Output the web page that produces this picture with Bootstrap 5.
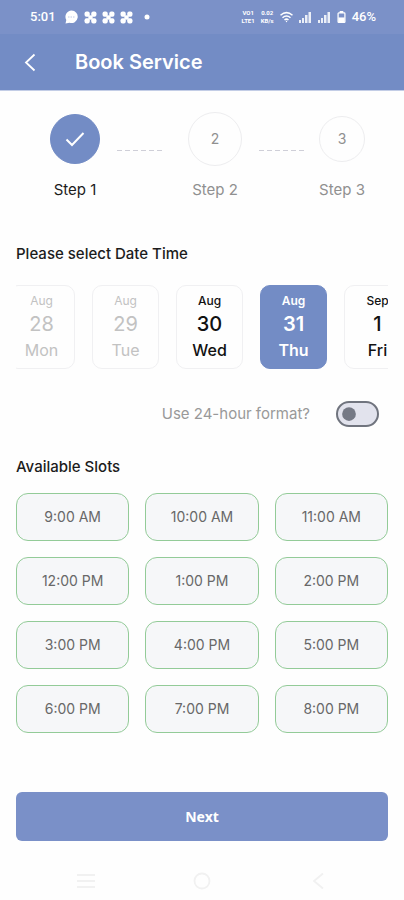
<!DOCTYPE html>
<html lang="en">
<head>
<meta charset="utf-8">
<meta name="viewport" content="width=device-width, initial-scale=1">
<title>Book Service</title>
<link href="https://cdn.jsdelivr.net/npm/bootstrap@5.3.0/dist/css/bootstrap.min.css" rel="stylesheet">
<style>
  :root { --brand: #738cc5; --brand-soft: #7b91c8; --hairline: #f0f0f2; }
  body { font-family: Inter, "Liberation Sans", sans-serif; color: #1c1c1c; background: #fefefe; }
  .status-strip { height: 34px; background: var(--brand-soft); color: #fff; font: 500 13px/16px Roboto, sans-serif; padding: 0 28px 0 30px; }
  .clovers { gap: 5px; margin: 0 11px 0 5px; }
  .status-right { gap: 6px; }
  .tiny-stat { font: 700 6px/8px Roboto, sans-serif; text-align: center; }
  .app-bar { height: 57px; background: var(--brand); border-bottom: 1px solid #c3cde6; padding: 0 16px; }
  .app-bar h1 { font-size: 20px; line-height: 24px; font-weight: 600; color: #fff; margin-left: 32px; }
  .back-btn { width: 27px; height: 32px; }
  .steps { padding: 21px 39px 0 50px; }
  .step { color: #909090; font-size: 15px; line-height: 20px; }
  .step.done { color: #1c1c1c; }
  .disc-box { height: 54px; }
  .disc { border: 1px solid #ededef; font-size: 14px; line-height: 20px; }
  .disc-sm { width: 46px; height: 46px; }
  .disc-md { width: 50px; height: 50px; }
  .disc-lg { width: 54px; height: 54px; }
  .step.done .disc { background: var(--brand); border-color: var(--brand); }
  .step-label { margin-top: 14px; }
  .link-wide { flex: 8 1 0; }
  .link-narrow { flex: 7 1 0; }
  .dashes { width: 47px; height: 1px; margin: 38px 0 0 17px; background: repeating-linear-gradient(90deg, #cfcfd8 0 5px, transparent 5px 8px); }
  .section-title { font-size: 15px; line-height: 20px; font-weight: 500; }
  .dates-block { margin-top: 44px; }
  .date-track { gap: 17px; margin-left: -8px; margin-top: 21px; }
  .date-card { width: 67px; height: 84px; border: 1px solid var(--hairline); border-radius: 10px; background: #fefefe; color: #111; font-weight: 500; padding: 4px 0; }
  .date-card:disabled { color: #c2c2c2; font-weight: 400; }
  .date-card.chosen { background: var(--brand); border-color: var(--brand); color: #fff; font-weight: 600; }
  .date-month { font-size: 12px; line-height: 20px; }
  .date-num { font-size: 20px; line-height: 26px; }
  .date-day { font-size: 16px; line-height: 26px; }
  .format-row { margin-top: 32px; gap: 26px; padding-right: 9px; }
  .format-row label { font-size: 15px; line-height: 20px; color: #999; }
  .format-row .form-check-input { width: 43px; height: 26px; margin: 0; border: 2px solid #70747e; background-color: #e2e3ed;
    background-image: url("data:image/svg+xml,%3Csvg xmlns='http://www.w3.org/2000/svg' viewBox='-4 -4 8 8'%3E%3Ccircle r='2.5' fill='%23757985'/%3E%3C/svg%3E"); }
  .slots-block { margin-top: 30px; }
  .slot { height: 48px; border: 1px solid #93cb98; border-radius: 12px; background: #f6f7f9; color: #686868; font-size: 14px; line-height: 20px; padding: 0; }
  .next-btn { height: 49px; margin-top: 59px; border-radius: 6px; background: #7a90c8; color: #fff; font: 700 14px/20px "Noto Sans", sans-serif; }
  .sys-nav { padding: 24px 74px 0; color: #f1f1f1; }
  .sys-nav button { width: 24px; height: 28px; color: inherit; }
</style>
<script src="https://cdn.jsdelivr.net/npm/bootstrap@5.3.0/dist/js/bootstrap.bundle.min.js"></script>
</head>
<body>
<svg class="d-none" aria-hidden="true">
  <symbol id="clover" viewBox="0 0 12 12"><g fill="currentColor"><rect x=".5" y=".5" width="4.800" height="4.800" rx="1.800"/><rect x="6.700" y=".5" width="4.800" height="4.800" rx="1.800"/><rect x=".5" y="6.700" width="4.800" height="4.800" rx="1.800"/><rect x="6.700" y="6.700" width="4.800" height="4.800" rx="1.800"/><rect x="4" y="4" width="4" height="4"/></g></symbol>
  <symbol id="signal" viewBox="0 0 13 12"><path d="M0 9h2v3H0zM3 7h2v5H3zM6 4h2.500v8H6zM9.500 1h2.500v11H9.500z" fill="currentColor" opacity=".85"/></symbol>
</svg>
<header>
  <div class="status-strip d-flex align-items-center justify-content-between">
    <div class="d-flex align-items-center">
      <span class="me-1">5:01</span>
      <svg class="ms-1" width="15" height="14" viewBox="0 0 15 14"><path d="M7.500.5a6.300 6.300 0 1 1-2 12.300L1.500 13.400 2.300 10A6.300 6.300 0 0 1 7.500.5z" fill="#fff"/><path d="M4 7h7" stroke="#aebbe0" stroke-width=".8" stroke-dasharray="1.500 1"/></svg>
      <div class="clovers d-flex">
        <svg width="13" height="13"><use href="#clover"/></svg>
        <svg width="13" height="13"><use href="#clover"/></svg>
        <svg width="13" height="13"><use href="#clover"/></svg>
      </div>
      <svg width="6" height="6"><circle cx="3" cy="3" r="2.500" fill="#fff"/></svg>
    </div>
    <div class="status-right d-flex align-items-center">
      <div class="tiny-stat"><div>VO1</div><div>LTE1</div></div>
      <div class="tiny-stat"><div>0.02</div><div>KB/s</div></div>
      <svg width="13" height="12" viewBox="0 0 13 12" fill="none" stroke="#fff" stroke-width="1.500"><path d="M.5 4.200Q6.500-1 12.500 4.200M2.500 6.700q4-3.400 8 0M4.500 9q2-1.700 4 0"/><circle cx="6.500" cy="10.500" r=".7" fill="#fff" stroke="none"/></svg>
      <svg width="13" height="12"><use href="#signal"/></svg>
      <svg width="13" height="12"><use href="#signal"/></svg>
      <svg width="9" height="14" viewBox="0 0 10 14"><path d="M3 1h4M2 2.500h6a.8.8 0 0 1 .8.8v8.900a.8.8 0 0 1-.8.8H2a.8.8 0 0 1-.8-.8V3.300A.8.8 0 0 1 2 2.500z" fill="none" stroke="#fff" stroke-width="1.400"/><path d="M1.500 7.500h7V13h-7z" fill="#fff"/></svg>
      <span>46%</span>
    </div>
  </div>
  <div class="app-bar d-flex align-items-center">
    <button type="button" class="btn p-0 border-0 back-btn d-flex align-items-center justify-content-center" aria-label="Back">
      <svg width="12" height="19" viewBox="0 0 12 19" fill="none" stroke="#fff" stroke-width="1.800"><path d="M10.500 1.500 2 9.500l8.500 8"/></svg>
    </button>
    <h1 class="mb-0">Book Service</h1>
  </div>
</header>

<main>
  <div class="steps d-flex">
    <div class="step done text-center">
      <div class="disc-box d-flex align-items-center justify-content-center">
        <div class="disc disc-md rounded-circle d-flex align-items-center justify-content-center">
          <svg width="20" height="16" viewBox="0 0 20 16" fill="none" stroke="#fff" stroke-width="2"><path d="M1.500 8.500 7 14 18.500 2"/></svg>
        </div>
      </div>
      <div class="step-label">Step 1</div>
    </div>
    <div class="link-wide"><div class="dashes"></div></div>
    <div class="step text-center">
      <div class="disc-box d-flex align-items-center justify-content-center"><div class="disc disc-lg rounded-circle d-flex align-items-center justify-content-center">2</div></div>
      <div class="step-label">Step 2</div>
    </div>
    <div class="link-narrow"><div class="dashes"></div></div>
    <div class="step text-center">
      <div class="disc-box d-flex align-items-center justify-content-center"><div class="disc disc-sm rounded-circle d-flex align-items-center justify-content-center">3</div></div>
      <div class="step-label">Step 3</div>
    </div>
  </div>

  <div class="px-3">
    <section class="dates-block">
      <h2 class="section-title mb-0">Please select Date Time</h2>
      <div class="overflow-hidden">
        <div class="date-track d-flex">
          <button type="button" class="date-card flex-shrink-0" disabled><div class="date-month">Aug</div><div class="date-num">28</div><div class="date-day">Mon</div></button>
          <button type="button" class="date-card flex-shrink-0" disabled><div class="date-month">Aug</div><div class="date-num">29</div><div class="date-day">Tue</div></button>
          <button type="button" class="date-card flex-shrink-0"><div class="date-month">Aug</div><div class="date-num">30</div><div class="date-day">Wed</div></button>
          <button type="button" class="date-card chosen flex-shrink-0" aria-pressed="true"><div class="date-month">Aug</div><div class="date-num">31</div><div class="date-day">Thu</div></button>
          <button type="button" class="date-card flex-shrink-0"><div class="date-month">Sep</div><div class="date-num">1</div><div class="date-day">Fri</div></button>
        </div>
      </div>
      <div class="format-row form-switch d-flex align-items-center justify-content-end">
        <label for="use24">Use 24-hour format?</label>
        <input class="form-check-input" type="checkbox" role="switch" id="use24">
      </div>
    </section>

    <section class="slots-block">
      <h2 class="section-title mb-3">Available Slots</h2>
      <div class="row row-cols-3 g-3">
        <div class="col"><button type="button" class="btn slot w-100">9:00 AM</button></div>
        <div class="col"><button type="button" class="btn slot w-100">10:00 AM</button></div>
        <div class="col"><button type="button" class="btn slot w-100">11:00 AM</button></div>
        <div class="col"><button type="button" class="btn slot w-100">12:00 PM</button></div>
        <div class="col"><button type="button" class="btn slot w-100">1:00 PM</button></div>
        <div class="col"><button type="button" class="btn slot w-100">2:00 PM</button></div>
        <div class="col"><button type="button" class="btn slot w-100">3:00 PM</button></div>
        <div class="col"><button type="button" class="btn slot w-100">4:00 PM</button></div>
        <div class="col"><button type="button" class="btn slot w-100">5:00 PM</button></div>
        <div class="col"><button type="button" class="btn slot w-100">6:00 PM</button></div>
        <div class="col"><button type="button" class="btn slot w-100">7:00 PM</button></div>
        <div class="col"><button type="button" class="btn slot w-100">8:00 PM</button></div>
      </div>
    </section>

    <button type="button" class="btn next-btn w-100">Next</button>
  </div>
</main>

<nav class="sys-nav d-flex justify-content-between" aria-label="System">
  <button type="button" class="btn p-0 border-0" aria-label="Recent apps"><svg width="20" height="16" viewBox="0 0 20 16" stroke="currentColor" stroke-width="2"><path d="M1 2h18M1 8h18M1 14h18"/></svg></button>
  <button type="button" class="btn p-0 border-0" aria-label="Home"><svg width="18" height="18" viewBox="0 0 18 18" fill="none" stroke="currentColor" stroke-width="1.800"><circle cx="9" cy="9" r="7.500"/></svg></button>
  <button type="button" class="btn p-0 border-0" aria-label="Back"><svg width="12" height="18" viewBox="0 0 12 18" fill="none" stroke="currentColor" stroke-width="1.800"><path d="M11 1.500 2 9l9 7.500"/></svg></button>
</nav>
</body>
</html>
